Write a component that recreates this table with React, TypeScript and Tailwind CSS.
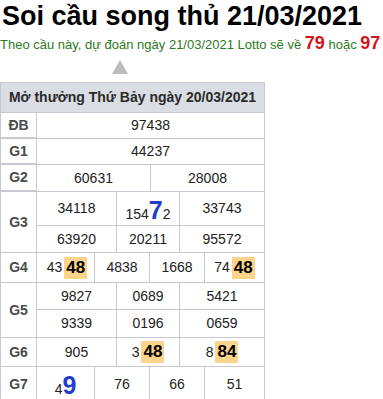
const B = 'border-[#c8c9d0]';

function Hi({ children }: { children: React.ReactNode }) {
  return <span className="inline-block bg-[#fdd58a] px-[2px] text-[17px] leading-[22px] font-bold text-black">{children}</span>;
}

function Cell({ w, children }: { w: string; children?: React.ReactNode }) {
  return <div className={`${w} flex items-center justify-center border-r ${B}`}>{children}</div>;
}

function Label({ children }: { children: React.ReactNode }) {
  return (
    <div className={`w-[36px] shrink-0 flex items-center justify-center border-r border-b ${B} font-bold text-[#4a4a4a]`}>
      {children}
    </div>
  );
}

export default function App() {
  return (
    <div className="w-[383px] h-[399px] overflow-hidden bg-white font-['Liberation_Sans',Arial,sans-serif]">
      <h1 className="pl-[2px] pt-[1px] text-[27px] leading-[31px] font-bold text-black whitespace-nowrap">
        Soi cầu song thủ 21/03/2021
      </h1>
      <p className="mt-[1px] text-[13px] leading-[20px] text-[#2e7a23] whitespace-nowrap">
        Theo cầu này, dự đoán ngày 21/03/2021 Lotto sẽ về{' '}
        <span className="text-[18px] font-bold text-[#d3131b]">79</span> hoặc{' '}
        <span className="text-[18px] font-bold text-[#d3131b]">97</span>
      </p>
      <div className="flex pl-[112px] pt-[5px]">
        <div className="h-0 w-0 border-x-[8px] border-b-[14px] border-x-transparent border-b-[#bdbdbd]" />
      </div>

      <div className={`mt-[8px] w-[265px] border-l border-t ${B} text-[14px] text-[#222]`}>
        <div className={`h-[30px] flex items-center justify-center border-r border-b ${B} bg-[#dadde4] font-bold text-[#2a2a2a]`}>
          Mở thưởng Thứ Bảy ngày 20/03/2021
        </div>

        <div className={`flex h-[26px] border-b ${B}`}>
          <Label>ĐB</Label>
          <Cell w="w-[228px]">97438</Cell>
        </div>
        <div className={`flex h-[26px] border-b ${B}`}>
          <Label>G1</Label>
          <Cell w="w-[228px]">44237</Cell>
        </div>
        <div className={`flex h-[27px] border-b ${B}`}>
          <Label>G2</Label>
          <Cell w="w-[114px]">60631</Cell>
          <Cell w="w-[114px]">28008</Cell>
        </div>

        <div className="flex h-[61px]">
          <Label>G3</Label>
          <div className="flex flex-col">
            <div className={`flex h-[34px] border-b ${B}`}>
              <Cell w="w-[80px]">34118</Cell>
              <Cell w="w-[63px]">
                <span className="pt-[5px]">
                  154<span className="text-[25px] font-bold text-[#1f3ccc]">7</span>2
                </span>
              </Cell>
              <Cell w="w-[85px]">33743</Cell>
            </div>
            <div className={`flex h-[27px] border-b ${B}`}>
              <Cell w="w-[80px]">63920</Cell>
              <Cell w="w-[63px]">20211</Cell>
              <Cell w="w-[85px]">95572</Cell>
            </div>
          </div>
        </div>

        <div className="flex h-[30px]">
          <Label>G4</Label>
          <div className={`flex border-b ${B}`}>
            <Cell w="w-[58px]">
              <span className="pl-[3px] pr-[2px]">43</span>
              <Hi>48</Hi>
            </Cell>
            <Cell w="w-[55px]">4838</Cell>
            <Cell w="w-[55px]">1668</Cell>
            <Cell w="w-[60px]">
              <span className="pr-[2px]">74</span>
              <Hi>48</Hi>
            </Cell>
          </div>
        </div>

        <div className="flex h-[55px]">
          <Label>G5</Label>
          <div className="flex flex-col">
            <div className={`flex h-[27px] border-b ${B}`}>
              <Cell w="w-[80px]">9827</Cell>
              <Cell w="w-[63px]">0689</Cell>
              <Cell w="w-[85px]">5421</Cell>
            </div>
            <div className={`flex h-[28px] border-b ${B}`}>
              <Cell w="w-[80px]">9339</Cell>
              <Cell w="w-[63px]">0196</Cell>
              <Cell w="w-[85px]">0659</Cell>
            </div>
          </div>
        </div>

        <div className="flex h-[29px]">
          <Label>G6</Label>
          <div className={`flex border-b ${B}`}>
            <Cell w="w-[80px]">905</Cell>
            <Cell w="w-[63px]">
              <span className="pr-[2px]">3</span>
              <Hi>48</Hi>
            </Cell>
            <Cell w="w-[85px]">
              <span className="pr-[2px]">8</span>
              <Hi>84</Hi>
            </Cell>
          </div>
        </div>

        <div className="flex h-[36px]">
          <Label>G7</Label>
          <div className={`flex border-b ${B}`}>
            <Cell w="w-[58px]">
              <span className="pt-[3px]">
                4<span className="text-[25px] font-bold text-[#1f3ccc]">9</span>
              </span>
            </Cell>
            <Cell w="w-[55px]">76</Cell>
            <Cell w="w-[55px]">66</Cell>
            <Cell w="w-[60px]">51</Cell>
          </div>
        </div>
      </div>
    </div>
  );
}
